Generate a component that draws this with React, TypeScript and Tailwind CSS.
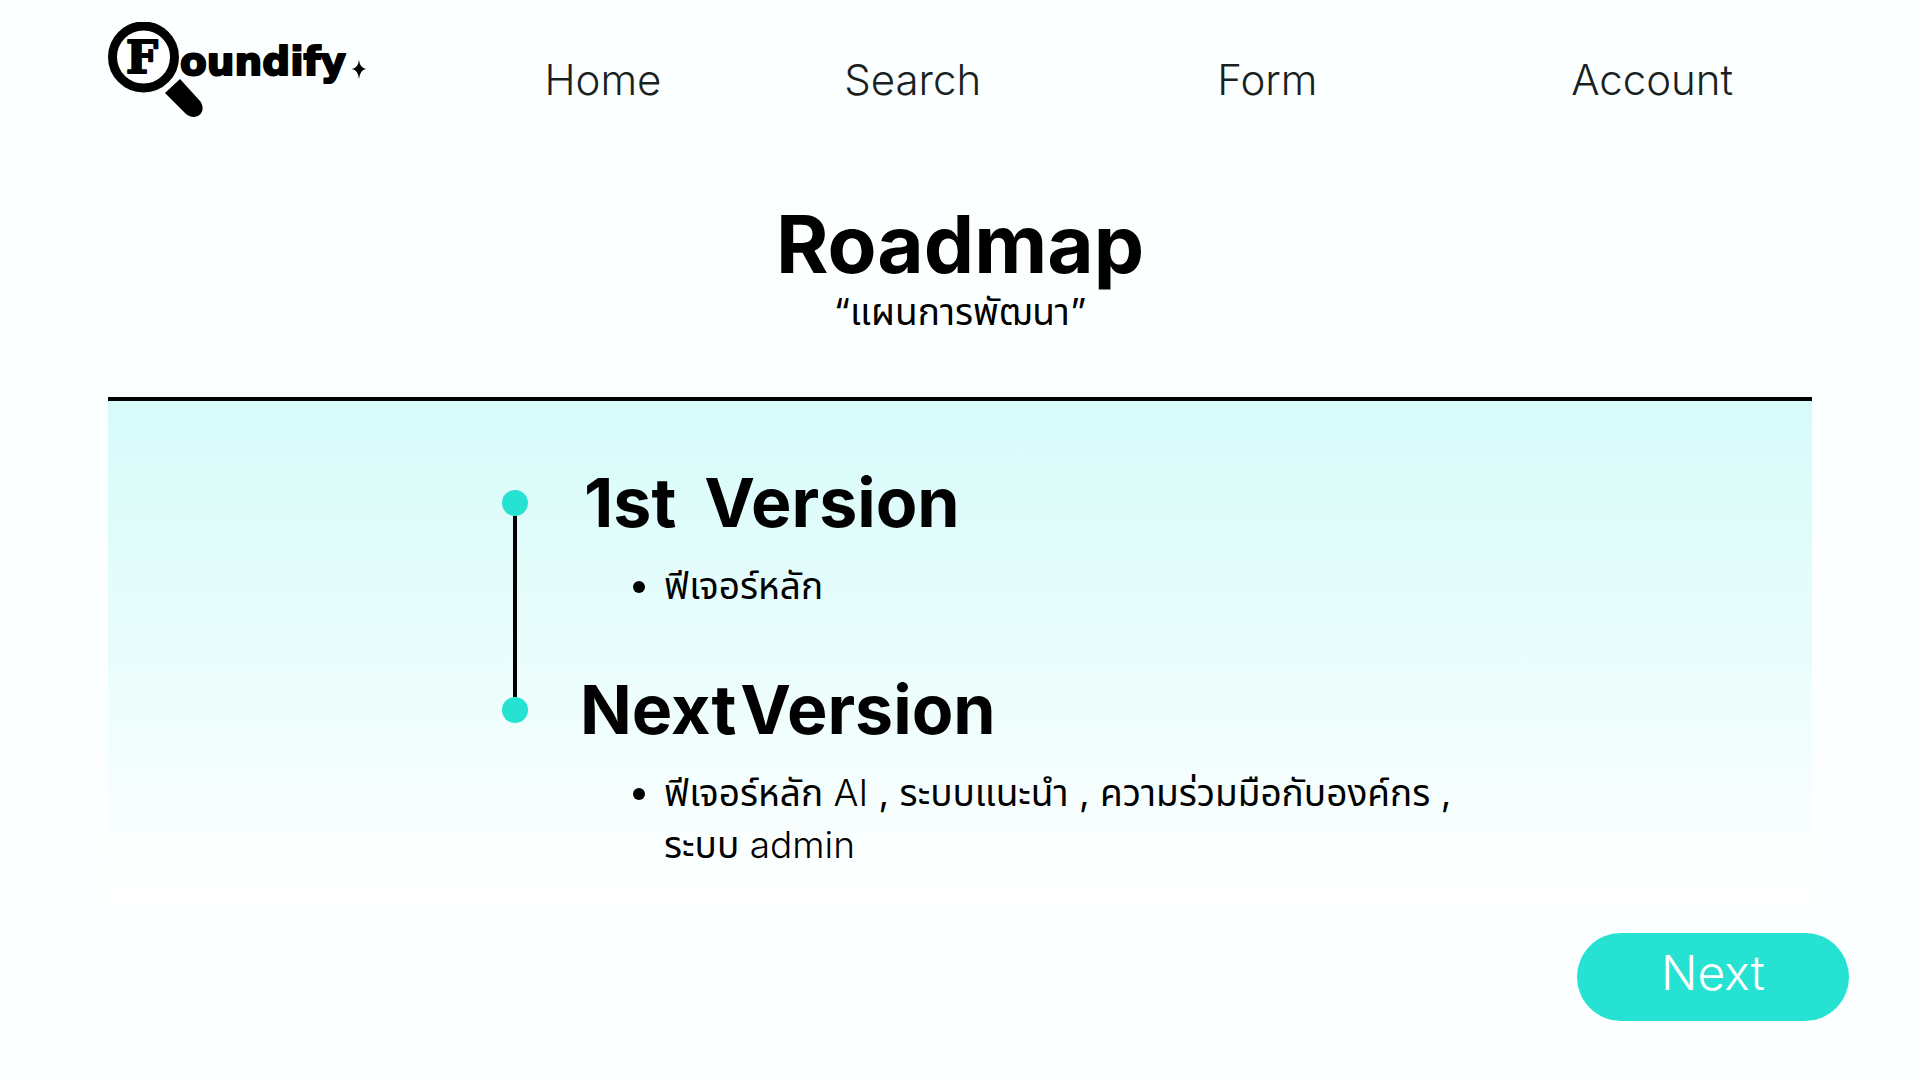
const navItems = ['Home', 'Search', 'Form', 'Account'];

type Part = { text: string; latin?: boolean };

const versions: { first: string; second: string; heading: string; items: Part[][] }[] = [
  {
    first: '1st',
    second: 'Version',
    heading: 'flex gap-7 pl-1 text-[68px] leading-[76px] font-bold',
    items: [[{ text: 'ฟีเจอร์หลัก' }]],
  },
  {
    first: 'Next',
    second: 'Version',
    heading: 'flex gap-1 text-[68px] leading-[76px] font-bold',
    items: [
      [
        { text: 'ฟีเจอร์หลัก ' },
        { text: 'AI', latin: true },
        { text: ' , ระบบแนะนำ , ความร่วมมือกับองค์กร , ระบบ ' },
        { text: 'admin', latin: true },
      ],
    ],
  },
];

function Logo() {
  return (
    <svg viewBox="0 0 260 96" className="h-24 w-[260px]" role="img" aria-label="Foundify">
      <circle cx="35.500" cy="35" r="31" fill="#fff" stroke="#000" strokeWidth="9" />
      <path d="M72 57 L92 79 C100 90 88 100 78 92 L57 71 Z" fill="#000" />
      <text
        x="18"
        y="51"
        fontFamily="'DejaVu Serif', serif"
        fontWeight="700"
        fontSize="45"
        stroke="#000"
        strokeWidth="2"
        strokeLinejoin="round"
      >
        F
      </text>
      <text
        x="72"
        y="53"
        fontFamily="'DejaVu Sans', sans-serif"
        fontWeight="700"
        fontSize="39"
        stroke="#000"
        strokeWidth="2"
        strokeLinejoin="round"
      >
        oundify
      </text>
      <path d="M251 38 Q252 46 258 47 Q252 48 251 57 Q250 48 244 47 Q250 46 251 38 Z" />
    </svg>
  );
}

export default function App() {
  return (
    <div className="flex min-h-screen flex-col bg-[#fbffff] font-['Inter','Noto_Sans_Thai','Noto_Sans',sans-serif] text-black">
      <header className="flex pt-[22px] pr-[83px] pl-[108px]">
        <a href="#" className="w-[340px] shrink-0">
          <Logo />
        </a>
        <nav className="grid flex-1 grid-cols-[31fr_31fr_40fr_37fr] items-center pt-5 text-center text-[42px] leading-[56px] font-light text-[#1a1f1f]">
          {navItems.map((item) => (
            <a key={item} href="#">
              {item}
            </a>
          ))}
        </nav>
      </header>

      <main className="flex flex-1 flex-col px-[108px]">
        <div className="mt-20 flex flex-col items-center">
          <h1 className="text-[80px] leading-[92px] font-bold">Roadmap</h1>
          <p className="text-[37px] leading-[44px]">“แผนการพัฒนา”</p>
        </div>

        <section className="mt-[63px] border-t-4 border-black bg-linear-to-b from-[#d6fbf9] via-[#e9fdfc] via-50% to-white pt-[63px] pl-[394px]">
          <ol className="max-w-[997px]">
            {versions.map((version, index) => (
              <li key={version.first} className="group flex gap-[52px]">
                <div className="flex w-[26px] shrink-0 flex-col items-center">
                  <span className={index === 0 ? 'h-[26px] w-1' : 'h-[26px] w-1 bg-black'} />
                  <span className="size-[26px] shrink-0 rounded-full bg-[#25e2d2]" />
                  {index < versions.length - 1 && <span className="w-1 flex-1 bg-black" />}
                </div>
                <div className="flex-1 pb-[59px] group-last:pb-8">
                  <h2 className={version.heading}>
                    <span>{version.first}</span>
                    <span>{version.second}</span>
                  </h2>
                  <ul className="mt-5 list-disc pl-[84px] text-[37px] leading-[52px]">
                    {version.items.map((parts) => (
                      <li key={parts[0].text}>
                        {parts.map((part) => (
                          <span key={part.text} className={part.latin ? 'font-light' : undefined}>
                            {part.text}
                          </span>
                        ))}
                      </li>
                    ))}
                  </ul>
                </div>
              </li>
            ))}
          </ol>
        </section>
      </main>

      <footer className="flex justify-end pr-[71px] pb-[59px]">
        <button
          type="button"
          className="h-[88px] w-[272px] rounded-full bg-[#25e2d2] pb-2 text-[48px] font-light text-white"
        >
          Next
        </button>
      </footer>
    </div>
  );
}
